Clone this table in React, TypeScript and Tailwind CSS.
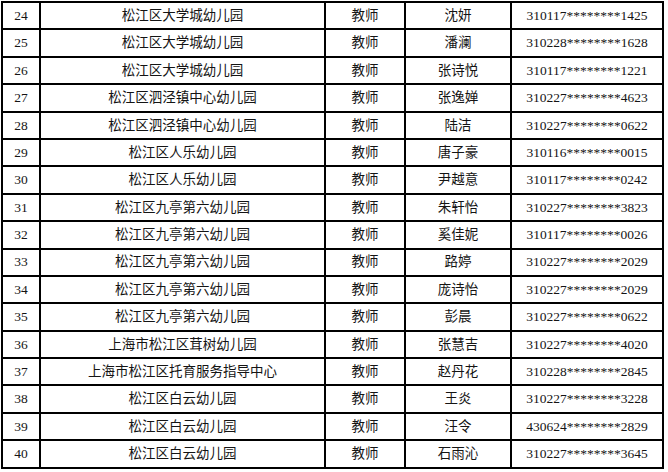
const rows: [string, string, string, string, string][] = [
  ["24", "松江区大学城幼儿园", "教师", "沈妍", "310117********1425"],
  ["25", "松江区大学城幼儿园", "教师", "潘澜", "310228********1628"],
  ["26", "松江区大学城幼儿园", "教师", "张诗悦", "310117********1221"],
  ["27", "松江区泗泾镇中心幼儿园", "教师", "张逸婵", "310227********4623"],
  ["28", "松江区泗泾镇中心幼儿园", "教师", "陆洁", "310227********0622"],
  ["29", "松江区人乐幼儿园", "教师", "唐子豪", "310116********0015"],
  ["30", "松江区人乐幼儿园", "教师", "尹越意", "310117********0242"],
  ["31", "松江区九亭第六幼儿园", "教师", "朱轩怡", "310227********3823"],
  ["32", "松江区九亭第六幼儿园", "教师", "奚佳妮", "310117********0026"],
  ["33", "松江区九亭第六幼儿园", "教师", "路婷", "310227********2029"],
  ["34", "松江区九亭第六幼儿园", "教师", "庞诗怡", "310227********2029"],
  ["35", "松江区九亭第六幼儿园", "教师", "彭晨", "310227********0622"],
  ["36", "上海市松江区茸树幼儿园", "教师", "张慧吉", "310227********4020"],
  ["37", "上海市松江区托育服务指导中心", "教师", "赵丹花", "310228********2845"],
  ["38", "松江区白云幼儿园", "教师", "王炎", "310227********3228"],
  ["39", "松江区白云幼儿园", "教师", "汪令", "430624********2829"],
  ["40", "松江区白云幼儿园", "教师", "石雨沁", "310227********3645"],
];

export default function App() {
  return (
    <div className="min-h-screen bg-white pt-px pl-px">
      <div
        className="grid w-[663px] grid-cols-[38px_285px_80px_106px_152px] auto-rows-[27.4px] border-l-2 border-t-2 border-black text-[13.5px] text-[#141414]"
        style={{ fontFamily: '"Liberation Serif", "Noto Sans CJK SC", serif' }}
      >
        {rows.map((r) =>
          r.map((cell, i) => (
            <div
              key={r[0] + "-" + i}
              className="flex items-center justify-center border-b-2 border-r-2 border-black leading-none"
            >
              {cell}
            </div>
          ))
        )}
      </div>
    </div>
  );
}
